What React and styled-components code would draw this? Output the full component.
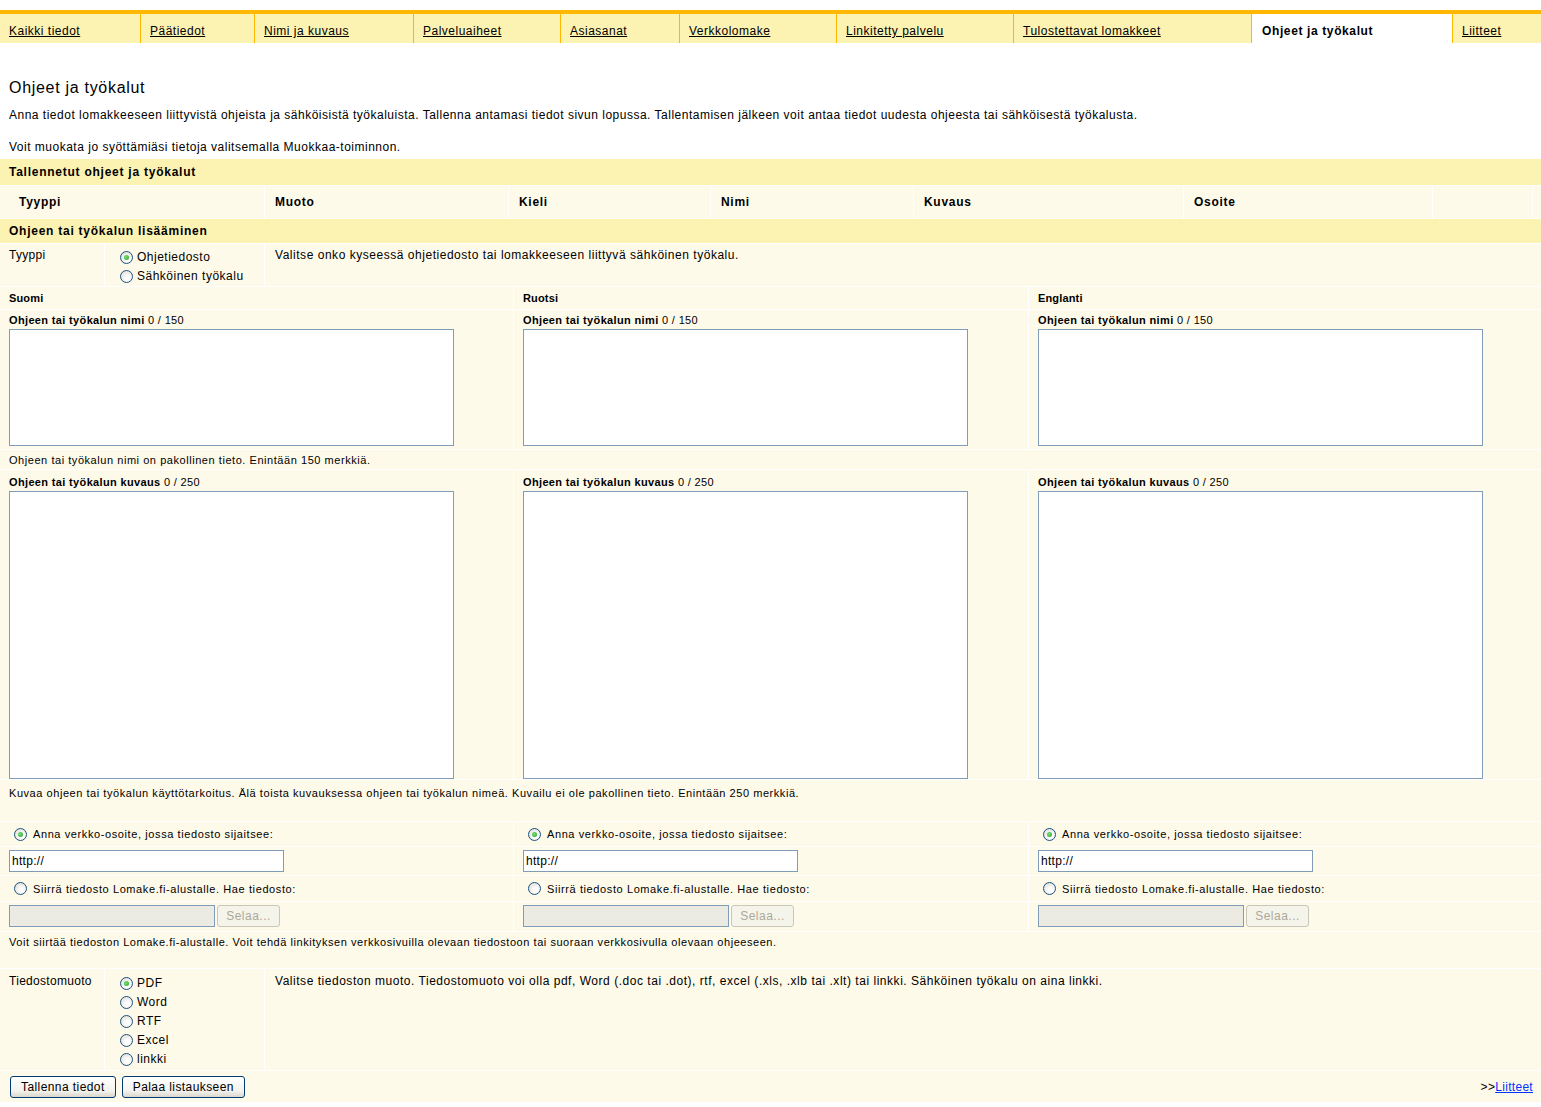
import React from "react";
import styled, {createGlobalStyle, css} from "styled-components";

const YELLOW = "#fcf2b2";
const CREAM = "#fefaea";
const ORANGE = "#ffb700";
const FIELD_BORDER = "#7f9db9";

const GlobalStyle = createGlobalStyle`
  body {
    margin: 0;
    background: #fff;
    font-family: "Liberation Sans", Arial, sans-serif;
    font-size: 12px;
    color: #000;
  }
`;

const Page = styled.div`
  width: 1541px;
  padding-top: 10px;
`;

const Tabs = styled.nav`
  display: flex;
  height: 29px;
  border-top: 4px solid ${ORANGE};
  background: ${YELLOW};
`;

const Tab = styled.div`
  width: ${props => props.w}px;
  flex: ${props => props.last ? "1" : "none"};
  box-sizing: border-box;
  padding: 10px 0 0 9px;
  border-left: ${props => props.first ? "none" : `1px solid ${ORANGE}`};
  background: ${props => props.active ? "#fff" : "transparent"};
  font-size: 12px;
  letter-spacing: 0.5px;
  white-space: nowrap;

  a { color: #000; text-decoration: underline; }
  strong { padding-left: 1px; letter-spacing: 0.62px; }
`;

const Intro = styled.section`
  padding: 35px 9px 0;

  h2 {
    margin: 0 0 9px;
    font-size: 16px;
    font-weight: normal;
    line-height: 20px;
    letter-spacing: 0.7px;
  }

  p {
    margin: 0 0 16px;
    line-height: 16px;
    letter-spacing: 0.5px;
  }

  p:last-child { margin-bottom: 4px; }
`;

const Bar = styled.div`
  background: ${YELLOW};
  height: ${props => props.h}px;
  box-sizing: border-box;
  padding: 0 9px;
  display: flex;
  align-items: center;
  font-weight: bold;
  font-size: 12px;
  letter-spacing: 0.75px;
  margin-bottom: 1px;
`;

const HeaderGrid = styled.div`
  display: grid;
  grid-template-columns: 255px 243px 201px 202px 269px 248px 99px 1fr;
  column-gap: 1px;
  padding-left: 9px;
  background: ${CREAM};
  margin-bottom: 1px;
`;

const HeaderCell = styled.div`
  height: 32px;
  box-sizing: border-box;
  padding: 0 10px;
  display: flex;
  align-items: center;
  font-weight: bold;
  font-size: 12px;
  letter-spacing: 0.7px;
  box-shadow: 1px 0 0 #fff;
`;

const Form = styled.div`
  display: flex;
  flex-direction: column;
  gap: 1px;
  background: #fff;
  padding-bottom: 6px;
`;

const FieldRow = styled.div`
  display: grid;
  grid-template-columns: 104px 159px 1fr;
  gap: 1px;
  height: ${props => props.h}px;
`;

const Cell = styled.div`
  background: ${CREAM};
  box-sizing: border-box;
  padding: ${props => props.pad || "4px 9px"};
  line-height: 16px;
  letter-spacing: ${props => props.ls || "0.3px"};
`;

const RadioList = styled.div`
  display: flex;
  flex-direction: column;
  gap: 3px;
`;

const RadioLabel = styled.label`
  display: flex;
  align-items: center;
  gap: ${props => props.gap || 4}px;
  font-size: ${props => props.small ? 11 : 12}px;
  letter-spacing: ${props => props.small ? 0.6 : 0.5}px;
  line-height: 16px;
`;

const RadioDot = styled.span`
  width: 11px;
  height: 11px;
  flex: none;
  border-radius: 50%;
  border: 1px solid #1c5180;
  background: radial-gradient(circle at 60% 65%, #fff 20%, #d6d6cf 100%);
  position: relative;

  ${props => props.checked && css`
    &::after {
      content: "";
      position: absolute;
      left: 3px;
      top: 3px;
      width: 5px;
      height: 5px;
      border-radius: 50%;
      background: radial-gradient(circle at 40% 40%, #7be07b, #21a121);
    }
  `}
`;

const LangGrid = styled.div`
  display: grid;
  grid-template-columns: 513px 514px 1fr;
  gap: 1px;
`;

const LangCell = styled.div`
  background: ${CREAM};
  box-sizing: border-box;
  height: ${props => props.h}px;
  padding: ${props => props.pad || "0 9px"};
  font-size: 11px;
  letter-spacing: 0.15px;
  display: flex;
  flex-direction: column;
  align-items: flex-start;
  justify-content: ${props => props.center ? "center" : "flex-start"};
`;

const FullRow = styled.div`
  grid-column: 1 / -1;
  background: ${CREAM};
  box-sizing: border-box;
  height: ${props => props.h}px;
  padding: ${props => props.pad || "2px 9px"};
  font-size: 11px;
  line-height: 14px;
  letter-spacing: 0.55px;
`;

const FieldLabel = styled.div`
  line-height: 14px;
  margin-bottom: 2px;
  letter-spacing: 0.35px;
`;

const TextBox = styled.div`
  width: 445px;
  height: ${props => props.h}px;
  box-sizing: border-box;
  border: 1px solid ${FIELD_BORDER};
  background: #fff;
`;

const UrlInput = styled.div`
  width: 275px;
  height: 22px;
  box-sizing: border-box;
  border: 1px solid ${FIELD_BORDER};
  background: #fff;
  padding: 3px 2px 0;
  font-size: 12px;
  line-height: 15px;
  letter-spacing: 0.3px;
`;

const FileRow = styled.div`
  display: flex;
  gap: 2px;
  align-items: center;
`;

const FileInput = styled.div`
  width: 206px;
  height: 22px;
  box-sizing: border-box;
  border: 1px solid ${FIELD_BORDER};
  background: #ebebe4;
`;

const BrowseButton = styled.div`
  width: 63px;
  height: 22px;
  box-sizing: border-box;
  border: 1px solid #c9c7ba;
  border-radius: 3px;
  background: #f5f4ea;
  color: #aca899;
  font-size: 12px;
  letter-spacing: 0.5px;
  display: flex;
  align-items: center;
  justify-content: center;
`;

const ButtonRow = styled.div`
  background: ${CREAM};
  height: 31px;
  display: flex;
  align-items: center;
  padding: 0 8px 0 10px;
  gap: 6px;
`;

const Button = styled.button`
  height: 22px;
  padding: 0 10px;
  border: 1px solid #003c74;
  border-radius: 3px;
  background: linear-gradient(#fff, #f3f2ed 70%, #d9d7cc);
  font-family: "Liberation Sans", Arial, sans-serif;
  font-size: 12px;
  letter-spacing: 0.42px;
  color: #000;
`;

const NextLink = styled.div`
  margin-left: auto;
  font-size: 12px;
  letter-spacing: 0.3px;

  a { color: #0033ff; text-decoration: underline; }
`;

const tabs = [
  ["Kaikki tiedot", 140],
  ["Päätiedot", 114],
  ["Nimi ja kuvaus", 159],
  ["Palveluaiheet", 147],
  ["Asiasanat", 119],
  ["Verkkolomake", 157],
  ["Linkitetty palvelu", 177],
  ["Tulostettavat lomakkeet", 238],
  ["Ohjeet ja työkalut", 201, true],
  ["Liitteet", 89],
];

const columns = ["Tyyppi", "Muoto", "Kieli", "Nimi", "Kuvaus", "Osoite", "", ""];
const languages = ["Suomi", "Ruotsi", "Englanti"];
const formats = ["PDF", "Word", "RTF", "Excel", "linkki"];

export default function App() {
  return (
    <Page>
      <GlobalStyle />
      <Tabs>
        {tabs.map(([name, w, active], i) => (
          <Tab key={name} w={w} active={active} first={i === 0} last={i === tabs.length - 1}>
            {active ? <strong>{name}</strong> : <a href="#">{name}</a>}
          </Tab>
        ))}
      </Tabs>

      <Intro>
        <h2>Ohjeet ja työkalut</h2>
        <p>Anna tiedot lomakkeeseen liittyvistä ohjeista ja sähköisistä työkaluista. Tallenna antamasi tiedot sivun lopussa. Tallentamisen jälkeen voit antaa tiedot uudesta ohjeesta tai sähköisestä työkalusta.</p>
        <p>Voit muokata jo syöttämiäsi tietoja valitsemalla Muokkaa-toiminnon.</p>
      </Intro>

      <Bar h={26}>Tallennetut ohjeet ja työkalut</Bar>
      <HeaderGrid>
        {columns.map((c, i) => <HeaderCell key={i}>{c}</HeaderCell>)}
      </HeaderGrid>
      <Bar h={24}>Ohjeen tai työkalun lisääminen</Bar>

      <Form>
        <FieldRow h={42}>
          <Cell pad="3px 9px">Tyyppi</Cell>
          <Cell pad="5px 15px 0">
            <RadioList>
              <RadioLabel><RadioDot checked />Ohjetiedosto</RadioLabel>
              <RadioLabel><RadioDot />Sähköinen työkalu</RadioLabel>
            </RadioList>
          </Cell>
          <Cell pad="3px 10px" ls="0.53px">Valitse onko kyseessä ohjetiedosto tai lomakkeeseen liittyvä sähköinen työkalu.</Cell>
        </FieldRow>

        <LangGrid>
          {languages.map(l => (
            <LangCell key={l} h={22} center><b>{l}</b></LangCell>
          ))}

          {languages.map(l => (
            <LangCell key={l} h={139} pad="3px 9px 0">
              <FieldLabel><b>Ohjeen tai työkalun nimi</b> 0 / 150</FieldLabel>
              <TextBox h={117} />
            </LangCell>
          ))}

          <FullRow h={19} pad="3px 9px 0">Ohjeen tai työkalun nimi on pakollinen tieto. Enintään 150 merkkiä.</FullRow>

          {languages.map(l => (
            <LangCell key={l} h={309} pad="5px 9px 0">
              <FieldLabel><b>Ohjeen tai työkalun kuvaus</b> 0 / 250</FieldLabel>
              <TextBox h={288} />
            </LangCell>
          ))}

          <FullRow h={41} pad="6px 9px 0">Kuvaa ohjeen tai työkalun käyttötarkoitus. Älä toista kuvauksessa ohjeen tai työkalun nimeä. Kuvailu ei ole pakollinen tieto. Enintään 250 merkkiä.</FullRow>

          {languages.map(l => (
            <LangCell key={l} h={24} pad="0 14px" center>
              <RadioLabel small gap={6}><RadioDot checked />Anna verkko-osoite, jossa tiedosto sijaitsee:</RadioLabel>
            </LangCell>
          ))}

          {languages.map(l => (
            <LangCell key={l} h={28} center>
              <UrlInput>http://</UrlInput>
            </LangCell>
          ))}

          {languages.map(l => (
            <LangCell key={l} h={25} pad="0 14px" center>
              <RadioLabel small gap={6}><RadioDot />Siirrä tiedosto Lomake.fi-alustalle. Hae tiedosto:</RadioLabel>
            </LangCell>
          ))}

          {languages.map(l => (
            <LangCell key={l} h={29} pad="3px 9px 0">
              <FileRow>
                <FileInput />
                <BrowseButton>Selaa...</BrowseButton>
              </FileRow>
            </LangCell>
          ))}

          <FullRow h={36} pad="3px 9px 0">Voit siirtää tiedoston Lomake.fi-alustalle. Voit tehdä linkityksen verkkosivuilla olevaan tiedostoon tai suoraan verkkosivulla olevaan ohjeeseen.</FullRow>
        </LangGrid>

        <FieldRow h={101}>
          <Cell pad="4px 9px">Tiedostomuoto</Cell>
          <Cell pad="6px 15px 0">
            <RadioList>
              {formats.map((f, i) => (
                <RadioLabel key={f}><RadioDot checked={i === 0} />{f}</RadioLabel>
              ))}
            </RadioList>
          </Cell>
          <Cell pad="4px 10px" ls="0.53px">Valitse tiedoston muoto. Tiedostomuoto voi olla pdf, Word (.doc tai .dot), rtf, excel (.xls, .xlb tai .xlt) tai linkki. Sähköinen työkalu on aina linkki.</Cell>
        </FieldRow>

        <ButtonRow>
          <Button>Tallenna tiedot</Button>
          <Button>Palaa listaukseen</Button>
          <NextLink>&gt;&gt;<a href="#">Liitteet</a></NextLink>
        </ButtonRow>
      </Form>
    </Page>
  );
}
